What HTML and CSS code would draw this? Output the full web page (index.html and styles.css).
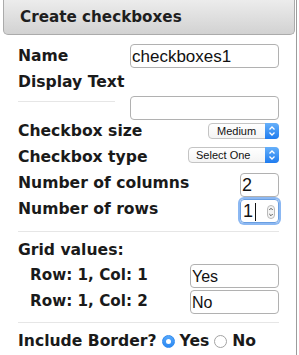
FILE: index.html
```html
<!DOCTYPE html>
<html lang="en">
<head>
    <meta charset="UTF-8">
    <title>Create checkboxes</title>
    <link rel="stylesheet" href="styles.css">
</head>
<body>
    <div class="panel">
        <div class="panel-header">Create checkboxes</div>

        <div class="form">
            <div class="row row-name">
                <label class="label">Name</label>
                <input class="text-input wide" type="text" value="checkboxes1">
            </div>

            <div class="row row-display">
                <label class="label">Display Text</label>
            </div>

            <div class="row row-blank">
                <span class="rule-stub"></span>
                <input class="text-input wide" type="text">
            </div>

            <div class="row row-size">
                <label class="label">Checkbox size</label>
                <div class="select select-size">
                    <span class="select-text">Medium</span>
                    <span class="select-arrow">
                        <svg width="14" height="16" viewBox="0 0 14 16"><polyline points="4.5,6.5 7,4 9.5,6.5" /><polyline points="4.5,9.5 7,12 9.5,9.5" /></svg>
                    </span>
                </div>
            </div>

            <div class="row row-type">
                <label class="label">Checkbox type</label>
                <div class="select select-type">
                    <span class="select-text">Select One</span>
                    <span class="select-arrow">
                        <svg width="14" height="16" viewBox="0 0 14 16"><polyline points="4.5,6.5 7,4 9.5,6.5" /><polyline points="4.5,9.5 7,12 9.5,9.5" /></svg>
                    </span>
                </div>
            </div>

            <div class="row row-cols">
                <label class="label">Number of columns</label>
                <input class="text-input num" type="text" value="2">
            </div>

            <div class="row row-rows">
                <label class="label">Number of rows</label>
                <div class="num-field focused">
                    <span class="num-value">1</span><span class="caret"></span>
                    <svg class="spinner" width="8" height="14" viewBox="0 0 8 14">
                        <rect x="0.5" y="0.5" width="7" height="13" rx="3.5" />
                        <polyline points="2.3,5 4,3.3 5.7,5" />
                        <polyline points="2.3,9 4,10.7 5.7,9" />
                    </svg>
                </div>
            </div>

            <div class="divider"></div>

            <div class="row row-grid-title">
                <span class="label">Grid values:</span>
            </div>

            <div class="row row-cell first-cell">
                <label class="label sub">Row: 1, Col: 1</label>
                <input class="text-input cell" type="text" value="Yes">
            </div>

            <div class="row row-cell">
                <label class="label sub">Row: 1, Col: 2</label>
                <input class="text-input cell" type="text" value="No">
            </div>

            <div class="divider"></div>

            <div class="row row-border">
                <span class="label">Include Border?</span>
                <span class="radio checked"></span>
                <span class="label">Yes</span>
                <span class="radio"></span>
                <span class="label">No</span>
            </div>
        </div>
    </div>
</body>
</html>
```

FILE: styles.css
```css
body {
    margin: 0;
    background: white;
    font-family: 'DejaVu Sans', Verdana, sans-serif;
    color: #1a1a1a;
}

.panel {
    box-sizing: border-box;
    width: 297px;
    min-height: 100vh;
    border-right: 1px solid #9c9c9c;
}

.panel-header {
    height: 34px;
    line-height: 35px;
    margin: 0 1px 0 3px;
    padding-left: 16px;
    background: linear-gradient(#ececec, #d2d2d2);
    border: 1px solid #ababab;
    border-top: none;
    border-radius: 0 0 5px 5px;
    font-size: 15.2px;
    font-weight: bold;
    color: #1e1e1e;
}

.form {
    padding: 8px 17px 0 18px;
}

.row {
    display: flex;
    align-items: center;
    justify-content: space-between;
}

.label {
    font-size: 15.6px;
    font-weight: bold;
    line-height: 18px;
    white-space: nowrap;
}

.label.sub {
    margin-left: 12px;
    font-size: 15.2px;
}

.row-name,
.row-display {
    height: 26px;
}

.row-blank {
    height: 25px;
    align-items: flex-start;
}

.row-blank .text-input {
    margin-top: 1px;
}

.rule-stub {
    width: 97px;
    height: 6px;
    border-bottom: 1px solid #e6e6e6;
}

.row-size {
    height: 22px;
}

.row-type {
    height: 26px;
}

.row-type .label {
    padding-top: 3px;
}

.row-cols {
    height: 24px;
    margin-top: 5px;
}

.row-rows {
    height: 24px;
    margin-top: 2px;
}

.row-cols .label,
.row-rows .label {
    padding-bottom: 5px;
}

.divider {
    height: 1px;
    margin-top: 8px;
    background: #e6e6e6;
}

.row-grid-title {
    height: 18px;
    margin-top: 9px;
}

.row-cell {
    height: 24px;
    margin-top: 2px;
}

.row-cell.first-cell {
    margin-top: 5px;
}

.row-cell .label {
    padding-bottom: 2px;
}

.row-border {
    height: 18px;
    margin-top: 9px;
    justify-content: flex-start;
}

/* inputs */

.text-input {
    box-sizing: border-box;
    height: 24px;
    margin: 0;
    padding: 1px 1px 0;
    border: 1px solid #b1b1b1;
    border-radius: 4px;
    background: white;
    font-family: 'Liberation Sans', Arial, sans-serif;
    color: #111;
    outline: none;
}

.text-input.wide {
    width: 149px;
    font-size: 17px;
}

.text-input.num {
    width: 39px;
    font-size: 18px;
}

.text-input.cell {
    width: 89px;
    font-size: 16px;
}

.num-field {
    box-sizing: border-box;
    display: flex;
    align-items: center;
    width: 39px;
    height: 24px;
    padding: 1px 3px 0 2px;
    border: 1px solid #6a9fe2;
    border-radius: 4px;
    box-shadow: 0 0 0 2px #8cb8f2;
    font-family: 'Liberation Sans', Arial, sans-serif;
    font-size: 18px;
    color: #111;
}

.caret {
    width: 1px;
    height: 18px;
    margin-left: 2px;
    background: #111;
}

.spinner {
    margin-left: auto;
}

.spinner rect {
    fill: #f3f3f3;
    stroke: #b9b9b9;
    stroke-width: 1;
}

.spinner polyline {
    fill: none;
    stroke: #555;
    stroke-width: 1;
}

/* selects */

.select {
    box-sizing: border-box;
    display: flex;
    height: 16px;
    border: 1px solid #c4c4c4;
    border-radius: 4px;
    background: linear-gradient(#ffffff, #f4f4f4);
    font-family: 'Liberation Sans', Arial, sans-serif;
    font-size: 11px;
    color: #111;
}

.select-size {
    width: 71px;
}

.select-type {
    width: 91px;
}

.select-text {
    flex: 1;
    padding-left: 7px;
    line-height: 14px;
}

.select-size .select-text {
    padding-left: 8px;
}

.select-arrow {
    width: 14px;
    margin: -1px -1px -1px 0;
    border-radius: 0 4px 4px 0;
    background: linear-gradient(#66b0fa, #1f7cef);
}

.select-arrow svg {
    display: block;
}

.select-arrow polyline {
    fill: none;
    stroke: white;
    stroke-width: 1.3;
}

/* radios */

.radio {
    box-sizing: border-box;
    width: 13px;
    height: 13px;
    margin: 0 5px 0 5px;
    border: 1px solid #a3a3a3;
    border-radius: 50%;
    background: white;
    flex-shrink: 0;
}

.radio.checked {
    display: flex;
    align-items: center;
    justify-content: center;
    border-color: #2f8af0;
    background: linear-gradient(#56a8fb, #2b88f2);
}

.radio.checked::after {
    content: "";
    width: 5px;
    height: 5px;
    border-radius: 50%;
    background: white;
}
```
